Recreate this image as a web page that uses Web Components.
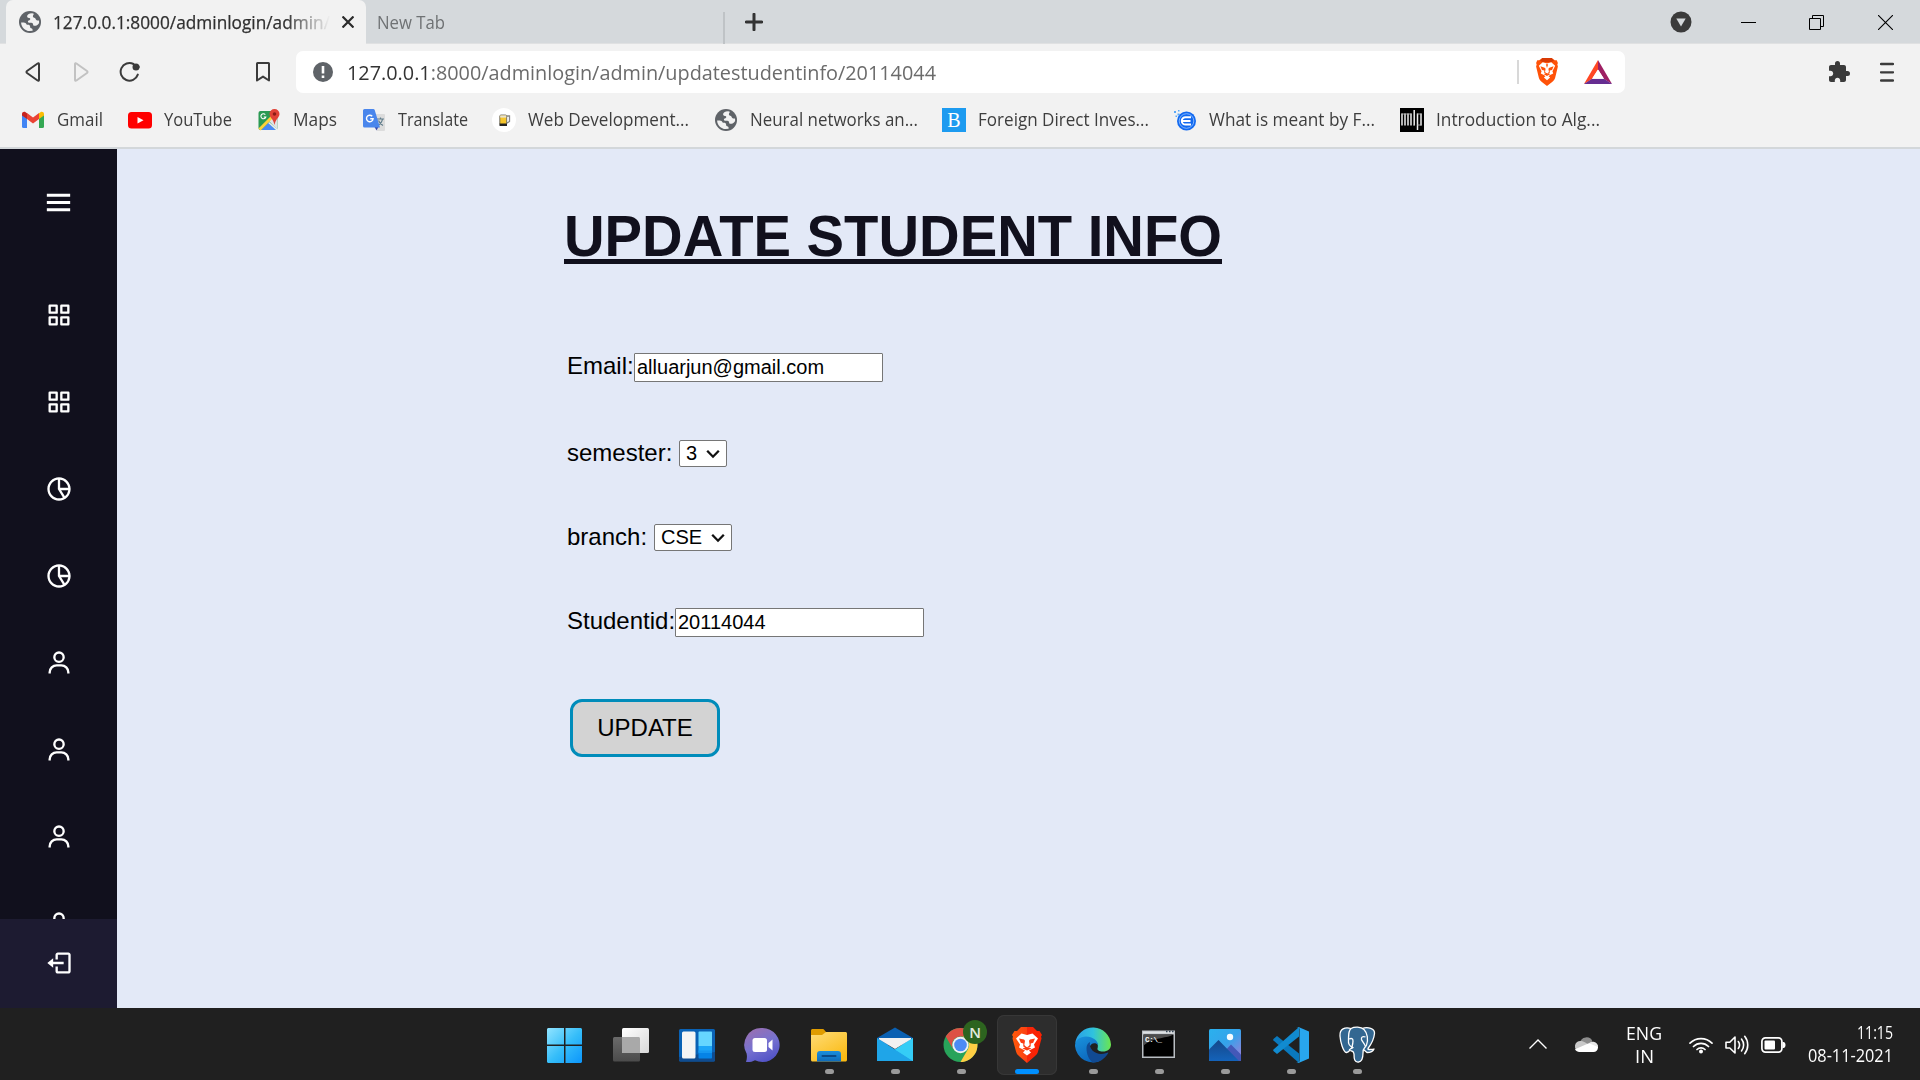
<!DOCTYPE html>
<html lang="en">
<head>
<meta charset="utf-8">
<title>Update student info</title>
<style>
html,body{margin:0;height:100%;overflow:hidden;background:#202020}
body{font-family:"Open Sans","Noto Sans",sans-serif}
</style>
</head>
<body>
<desktop-screen></desktop-screen>
<script>
const BX = {
  menu: '<path d="M4 6h16v2H4zm0 5h16v2H4zm0 5h16v2H4z"/>',
  grid: '<path d="M10 3H4a1 1 0 0 0-1 1v6a1 1 0 0 0 1 1h6a1 1 0 0 0 1-1V4a1 1 0 0 0-1-1zM9 9H5V5h4v4zM20 3h-6a1 1 0 0 0-1 1v6a1 1 0 0 0 1 1h6a1 1 0 0 0 1-1V4a1 1 0 0 0-1-1zm-1 6h-4V5h4v4zM10 13H4a1 1 0 0 0-1 1v6a1 1 0 0 0 1 1h6a1 1 0 0 0 1-1v-6a1 1 0 0 0-1-1zm-1 6H5v-4h4v4zM20 13h-6a1 1 0 0 0-1 1v6a1 1 0 0 0 1 1h6a1 1 0 0 0 1-1v-6a1 1 0 0 0-1-1zm-1 6h-4v-4h4v4z"/>',
  pie: '<path d="M12 2C6.486 2 2 6.486 2 12s4.486 10 10 10 10-4.486 10-10S17.514 2 12 2zm7.931 9H13V4.069A8.008 8.008 0 0 1 19.931 11zM4 12c0-4.072 3.061-7.436 7-7.931V12a.996.996 0 0 0 .111.438c.015.03.022.063.041.093l4.202 6.723A7.949 7.949 0 0 1 12 20c-4.411 0-8-3.589-8-8zm13.052 6.196L13.805 13h6.126a7.992 7.992 0 0 1-2.879 5.196z"/>',
  user: '<path d="M12 2a5 5 0 1 0 5 5 5 5 0 0 0-5-5zm0 8a3 3 0 1 1 3-3 3 3 0 0 1-3 3zm9 11v-1a7 7 0 0 0-7-7h-4a7 7 0 0 0-7 7v1h2v-1a5 5 0 0 1 5-5h4a5 5 0 0 1 5 5v1z"/>',
  exit: '<path d="m2 12 5 4v-3h9v-2H7V8z"/><path d="M20 3h-9c-1.103 0-2 .897-2 2v4h2V5h9v14h-9v-4H9v4c0 1.103.897 2 2 2h9c1.103 0 2-.897 2-2V5c0-1.103-.897-2-2-2z"/>'
};
const GLOBE = '<circle cx="12" cy="12" r="11" fill="#5f6368"/><path fill="#f2f2f2" d="M14.2 3.2c-3.4.2-5.2 1.6-5.1 3.3.1 1 .9 1.5 2 1.4 1.300-.1 1.400 1 .9 1.900-.6 1-1.900.6-2.100 1.700-.1.900.700 1.200 2.100 1.200 1.800 0 3 .3 3.100 1.700.1 1.300 1.300 1.600 2.600 1.400 1.300-.2 2-.900 2.900-2 .6-.7.700-2.200.300-3.400-.9.400-1.900.2-2.600-.4-.7-.7-.5-1.600-1.400-2.100-.9-.4-1.900-.5-2-1.500-.1-1.200 1-1.700.9-2.600z"/><path fill="#f2f2f2" d="M3.100 12.500c.1 4.700 3.900 8.500 8.500 8.600l3-.4c.2-1.200-.3-2.100-1.500-2.400-.9-.2-1-.8-1-1.700 0-1.300-.9-1.900-2.200-1.900-1.200 0-1.500-.7-1.900-1.300-.5-.8-2.700-1.100-4.900-.9z"/>';
const ICONS = {
  globe: [24,24,'0 0 24 24',GLOBE],
  close: [12,12,'0 0 12 12','<path d="M.5.500l11 11M11.500.500l-11 11" stroke="#2b2b2b" stroke-width="2.200" fill="none"/>'],
  plus: [18,18,'0 0 18 18','<path d="M9 1.200v15.600M1.200 9h15.600" stroke="#333" stroke-width="3" stroke-linecap="round"/>'],
  dropdown: [22,22,'0 0 22 22','<circle cx="11" cy="11" r="10.500" fill="#3b3b3b"/><path d="M6.300 7.500h9.400L11 15.400z" fill="#d5d9dc"/>'],
  min: [15,15,'0 0 15 15','<path d="M0 7.500h15" stroke="#000"/>'],
  restore: [15,15,'0 0 15 15','<path d="M.5 3.500h11v11H.5zM3.500 3.500v-3h11v11h-3" fill="none" stroke="#000"/>'],
  wclose: [15,15,'0 0 15 15','<path d="M0 0l15 15M15 0 0 15" stroke="#000" fill="none" stroke-width="1.100"/>'],
  back: [16,22,'0 0 16 22','<path d="M14 3.200v15.600c0 1-.7 1.200-1.400.7L2 12c-.7-.5-.7-1.500 0-2L12.600 2.500c.7-.5 1.400-.3 1.400.7z" fill="none" stroke="#3b3b3b" stroke-width="2"/>'],
  fwd: [16,22,'0 0 16 22','<path d="M2 3.200v15.600c0 1 .7 1.200 1.400.7L14 12c.7-.5.7-1.500 0-2L3.400 2.500C2.700 2 2 2.200 2 3.200z" fill="none" stroke="#c2c2c2" stroke-width="2"/>'],
  reload: [22,22,'0 0 22 22','<path d="M18.800 13.600A8.800 8.800 0 1 1 14.500 3" fill="none" stroke="#3b3b3b" stroke-width="2" stroke-linecap="round"/><circle cx="17" cy="6" r="3.500" fill="#3b3b3b"/><path d="M17 6h2.500v1" stroke="#3b3b3b" stroke-width="2"/>'],
  bookmark: [16,22,'0 0 16 22','<path d="M2.500 2h11c.3 0 .5.200.5.500v17L8 15.600 2 19.500v-17c0-.3.200-.5.500-.5z" fill="none" stroke="#3b3b3b" stroke-width="2" stroke-linejoin="round"/>'],
  info: [20,20,'0 0 20 20','<circle cx="10" cy="10" r="10" fill="#5f6368"/><path d="M8.700 4h2.600v7.500H8.700zM8.700 13.500h2.600V16H8.700z" fill="#fff"/>'],
  brave: [24,28,'0 0 30 36','<path fill="#ff5208" d="M9 0h12l4 3h2.500l1.500 3.500-.700 2 .700 2.500-3.500 14.500c-.500 2-1.500 3.500-3.500 5L15 36l-7-5.500c-2-1.500-3-3-3.500-5L1 11l.700-2.500L1 6.500 2.500 3H5z"/><path fill="#d83a05" d="M9 0h12l3 3.500-3 1.500H9L6 3.500z"/><path fill="#fff" d="M9.500 5.500 15 7l5.500-1.500L25.500 10l-3.500 7 1 3-4 2-2 1.500 2 1.500-4 3.500-4-3.500 2-1.500-2-1.500-4-2 1-3-3.500-7z"/><path fill="#ff5208" d="M6.500 10.500 12 12.500l1.200 1.200-.7 4.300 2 2v1l-3-1.500 0-3.500-3-.700zM23.500 10.500 18 12.500l-1.200 1.200.7 4.300-2 2v1l3-1.500 0-3.500 3-.700zM11 21l4-1.600 4 1.600-4 2zM13.500 8h3L15 13z"/>'],
  bat: [28,24,'0 0 28 24','<path fill="#ff4724" d="M14 0 0 24l8-5 6-9.500z"/><path fill="#9e1f63" d="M14 0l14 24-8-5-6-9.500z"/><path fill="#662d91" d="M0 24h28l-8-5.300H8z"/><path fill="#fff" d="M14 9.500 20 18.700H8z"/>'],
  puzzle: [22,22,'1 1 22 22','<path fill="#3b3b3b" d="M20.500 11H19V7c0-1.100-.9-2-2-2h-4V3.500a2.500 2.500 0 0 0-5 0V5H4c-1.100 0-1.990.9-1.990 2v3.800H3.500c1.490 0 2.700 1.210 2.700 2.700s-1.210 2.700-2.700 2.700H2V20c0 1.100.9 2 2 2h3.800v-1.500c0-1.490 1.210-2.700 2.700-2.700s2.700 1.210 2.700 2.700V22H17c1.100 0 2-.9 2-2v-4h1.500a2.500 2.500 0 0 0 0-5z"/>'],
  burger: [14,20,'0 0 14 20','<path d="M1 2h12M1 10.300h12M1 18.500h12" stroke="#3b3b3b" stroke-width="2.300" stroke-linecap="round"/>'],
  gmail: [24,24,'0 0 24 24','<path fill="#4285f4" d="M1 6v12.500A1.500 1.500 0 0 0 2.500 20H6V10z"/><path fill="#34a853" d="M23 6v12.500a1.500 1.500 0 0 1-1.500 1.500H18V10z"/><path fill="#ea4335" d="M6 11V5l6 4.500L18 5v6l-6 4.500z"/><path fill="#c5221f" d="M1 7.500V6c0-2 2.200-2.800 3.600-1.800L6 5.200V11z"/><path fill="#fbbc04" d="M23 7.500V6c0-2-2.200-2.800-3.600-1.800L18 5.200V11z"/>'],
  youtube: [24,24,'0 0 24 24','<rect y="4" width="24" height="16.500" rx="3.500" fill="#f00"/><path fill="#fff" d="M9.500 9v6.500l6-3.250z"/>'],
  maps: [24,24,'0 0 24 24','<rect x="1.500" y="3" width="19" height="19" rx="2" fill="#2a9a53"/><path fill="#dfe3e6" d="M20.500 5v17L11 12z"/><path fill="#4a89f3" d="M4 22 11.500 14.500 19 22z"/><path d="M2.500 21.500 15.500 8.500" stroke="#fdd23b" stroke-width="3"/><path d="M11.700 14.500 20 22" stroke="#eef0f2" stroke-width="1.500"/><path d="M8.300 6.600A2.500 2.500 0 1 0 8.800 9H6.800" stroke="#fff" stroke-width="1.100" fill="none"/><path fill="#e04236" d="M17.500 1a5 5 0 0 1 5 5c0 3.500-4 5-5 11-1-6-5-7.500-5-11a5 5 0 0 1 5-5z"/><circle cx="17.500" cy="6" r="1.800" fill="#8c1d16"/>'],
  translate: [24,24,'0 0 24 24','<path fill="#dcdcdc" d="M11 6h11a1 1 0 0 1 1 1v15a1 1 0 0 1-1 1h-7z"/><path d="M15 11h7M18.500 9.500V11M20.500 11c-.5 3-2 5-4.500 6.500M16.500 12.500c1 2.500 2.500 4 4.500 5" stroke="#607d8b" stroke-width="1.200" fill="none"/><path fill="#3949ab" d="M12 18h5l-2.500 4.500z"/><path fill="#4a86ec" d="M2.500 1h8.800a1.500 1.500 0 0 1 1.400 1L18 19.500H2.500A1.500 1.500 0 0 1 1 18V2.500A1.500 1.500 0 0 1 2.500 1z"/><path d="M10.200 8.200a3.300 3.300 0 1 0 .9 2.600H8.200" stroke="#fff" stroke-width="1.400" fill="none"/>'],
  beer: [24,24,'0 0 24 24','<circle cx="12" cy="12" r="12" fill="#fff"/><path d="M15 8h2.500v5.500L15 15" fill="none" stroke="#888" stroke-width="1.300"/><rect x="7.800" y="7" width="6.900" height="10" rx="1.200" fill="#f6c62c" stroke="#555" stroke-width=".8"/><path fill="#e8e2d2" d="M8.200 7.400h6v2.200h-6z"/><path fill="#222" d="M7.500 15.500H15V18H7.500z"/>'],
  brit: [24,24,'0 0 24 24','<path fill="#1d9bf0" d="M0 0h24v24H0z"/><text x="12" y="18.500" text-anchor="middle" font-family="Liberation Serif" font-size="20" fill="#fff">B</text>'],
  ecom: [24,24,'0 0 24 24','<circle cx="13.500" cy="13" r="9.500" fill="#1269f0"/><circle cx="13.500" cy="13" r="7.300" fill="none" stroke="#9cc6ff" stroke-width=".8"/><path d="M18 9.200h-5.500a3.700 3.700 0 0 0 0 7.400H18M9.500 13h8" stroke="#fff" stroke-width="2" fill="none"/><path fill="#5aa9f7" d="M1 3h2v2H1zM4.500 5.500h2v2h-2zM5 2h1.500v1.500H5zM2.500 7.500H4V9H2.500z"/>'],
  mit: [24,24,'0 0 24 24','<path d="M0 0h24v24H0z"/><path d="M2 5.500v12M5 5.500v12M8 5.500v12M11 5.500v12M14.200 2v15.500M17.500 5.500V22M21 5.500v12" stroke="#eee" stroke-width="1.500"/><path d="M1.500 6h10M17 6h4.500M13.500 17h1M17 17h4.500" stroke="#bbb" stroke-width=".8"/>'],
  start: [40,40,'0 0 40 40','<defs><linearGradient id="a" gradientUnits="userSpaceOnUse" x1="4" y1="4" x2="38" y2="38"><stop stop-color="#8ae1ff"/><stop offset=".5" stop-color="#35bdf9"/><stop offset="1" stop-color="#0a94fb"/></linearGradient></defs><path fill="url(#a)" d="M3.500 3H19v16.500H2V4.500C2 3.700 2.700 3 3.500 3zM20.500 3h15c.8 0 1.500.7 1.500 1.500v15H20.500zM2 21h17v17H3.500c-.8 0-1.500-.7-1.500-1.500zM20.500 21H37v15.500c0 .8-.7 1.500-1.500 1.500h-15z"/>'],
  taskview: [40,40,'0 0 40 40','<defs><linearGradient id="a" x2="1" y2="1"><stop stop-color="#fff"/><stop offset="1" stop-color="#d8d8d8"/></linearGradient><linearGradient id="b" x2="0" y2="1"><stop stop-color="#6a6a6a"/><stop offset="1" stop-color="#4b4b4b"/></linearGradient></defs><rect x="2" y="12" width="27" height="24.500" rx="1.500" fill="url(#b)"/><rect x="11" y="3" width="27" height="25" rx="1.500" fill="url(#a)"/><path fill="#a9a9a9" d="M11 12h16.500c.8 0 1.500.7 1.500 1.500V28H12.500c-.8 0-1.500-.7-1.500-1.500z"/>'],
  widgets: [40,40,'0 0 40 40','<rect x="2" y="4" width="36" height="32.500" rx="1.500" fill="#0a62b5"/><path d="M2 32v3c0 .8.700 1.500 1.500 1.500h33c.8 0 1.500-.7 1.500-1.500v-8z" fill="#0f4c90"/><rect x="5" y="6.500" width="13.500" height="27" rx="1.500" fill="#f5f5f5"/><path fill="#66d6ff" d="M21.500 7.500c0-.6.400-1 1-1H34c.6 0 1 .4 1 1V21H21.500z"/><path fill="#1da6f8" d="M21.500 21H35v6.500H21.500z"/><path fill="#0583e6" d="M21.500 27.500H35v5c0 .6-.4 1-1 1H22.500c-.6 0-1-.4-1-1z"/><path fill="#1597f0" d="M21.500 25.500H35V28H21.500z"/>'],
  chat: [40,40,'0 0 40 40','<defs><linearGradient id="a" x1=".2" x2=".7" y2="1"><stop stop-color="#9a6fb0"/><stop offset=".5" stop-color="#7772d0"/><stop offset="1" stop-color="#4f51c6"/></linearGradient></defs><path fill="url(#a)" d="M19.500 3a17 17 0 1 1-7.500 32.200c-2.500 1.500-5.500 2-9 1.800 1-3 1.200-5.300.6-8.500A17 17 0 0 1 19.500 3z"/><rect x="9.500" y="13" width="14.500" height="14" rx="2.500" fill="#fff"/><path fill="#fff" d="m25.500 18 4-3.500v11l-4-3.500z"/>'],
  folder: [40,40,'0 0 40 40','<defs><linearGradient id="a" x2=".7" y2="1"><stop stop-color="#ffdc77"/><stop offset="1" stop-color="#fabb15"/></linearGradient><linearGradient id="b" x2="0" y2="1"><stop stop-color="#1b8fdd"/><stop offset="1" stop-color="#0f6bb9"/></linearGradient></defs><path fill="#e09c00" d="M2 5.500C2 4.700 2.700 4 3.500 4h10c1 0 1.500.5 3.500 3v4H2z"/><path fill="url(#a)" d="M2 10h11l4-3h19.500c.8 0 1.500.7 1.500 1.500v26.500c0 .8-.7 1.500-1.500 1.500h-33c-.8 0-1.500-.7-1.500-1.500z"/><path fill="url(#b)" d="M8 36.500V29a3 3 0 0 1 3-3h18a3 3 0 0 1 3 3v7.500z"/><path d="M13.500 31h13" stroke="#0a4a88" stroke-width="2" stroke-linecap="round"/>'],
  mail: [40,40,'0 0 40 40','<path fill="#0a60b2" d="M20 2.500 38 13v7H2v-7z"/><path fill="#2bc4f3" d="M38 13v23H2z"/><path fill="#1fa5e8" d="M2 13v23h36L2 13z"/><path fill="#35cdf6" d="M38 13 20 24.500 38 36z"/><path fill="#f1f1f1" d="M4 13h32v1.300L20 24 4 14.300z"/>'],
  chrome: [40,40,'0 0 40 40','<circle cx="19.500" cy="20" r="17" fill="#28a35a"/><path fill="#dd5144" d="M4.800 11.500a17 17 0 0 1 29.400 0H19.500A8.500 8.500 0 0 0 12.100 24.200z"/><path fill="#ffce44" d="M34.200 11.500A17 17 0 0 1 19.500 37l7.400-12.800a8.500 8.500 0 0 0-7.400-12.700z"/><circle cx="19.500" cy="20" r="8.200" fill="#f1f1f1"/><circle cx="19.500" cy="20" r="6.300" fill="#4c8bf5"/>'],
  bravebig: [40,40,'-5 -2 40 40','<defs><linearGradient id="a"><stop stop-color="#ff5a0a"/><stop offset=".5" stop-color="#fb4012"/><stop offset=".51" stop-color="#f5260a"/><stop offset="1" stop-color="#ff2000"/></linearGradient></defs><path fill="url(#a)" d="M9 0h12l4 4h2.500l2.500 4-1 1.500.500 2-3.500 13c-.500 2-1.500 3.500-3.500 5L15 36l-7.500-6.500c-2-1.500-3-3-3.500-5L.500 11.500l.500-2L0 8l2.500-4H5z"/><path fill="#fff" d="M9.500 6.500 15 8l5.500-1.500 5.500 5-4 6 1 3-4 2-2 1 2 2-4 3-4-3 2-2-2-1-4-2 1-3-4-6z"/><path fill="#fb3c12" d="M7 11.500 12 12.500l1 1.200-.7 4.300 2 2v1l-3-1.500 0-3-2.500-.700zM23 11.500 18 12.500l-1 1.200.7 4.300-2 2v1l3-1.500 0-3 2.500-.700zM10.500 21.500l4.500-1.700 4.500 1.700-4.500 2z"/>'],
  edge: [40,40,'0 0 40 40','<defs><linearGradient id="a"><stop stop-color="#2a9fe6"/><stop offset=".5" stop-color="#2fc2df"/><stop offset="1" stop-color="#6be64e"/></linearGradient><linearGradient id="b" x2=".5" y2="1"><stop stop-color="#1a93dd"/><stop offset="1" stop-color="#0c66bb"/></linearGradient></defs><path fill="url(#a)" d="M2.200 18A18 18 0 0 1 38 19.500c0 4.500-3.500 7-8 7-4 0-6-1.500-5.500-3 1.500-4-1-9.500-8-9.500-6 0-11 1.500-14.300 4z"/><path fill="url(#b)" d="M2 21c0-6 5-9.500 11-9.500 7 0 12 4.500 12 8.500-2-3-8-2.500-8.500 3-.5 6 5 13 12 12.300A18 18 0 0 1 2 21z"/><path fill="#114a92" d="M13.500 23c0-3 1.500-5 3.500-6-1.500 7 5 12 11 12 4 0 6-1.500 7-1.500.5 0 .3.500 0 1-3 5-8.500 9-15 9-4-2.500-6.500-8-6.500-14.500z"/>'],
  cmd: [40,40,'0 0 40 40','<path fill="#b9bec3" d="M3 5.500h33v27.500H3z"/><path fill="#dfe2e4" d="M4 6.500h31v2H4z"/><path fill="#000" d="M4.500 9.500h30v22h-30z"/><path fill="#4d4d4d" d="M4.500 9.500h29.500c-5 4-18 2-29.500 11z"/><path d="M27 6.500h1.500M30 6.500h1.500M33 6.500h1.500" stroke="#345" stroke-width="1.500"/><text x="6" y="16.500" font-family="Liberation Mono" font-weight="bold" font-size="7.500" letter-spacing="-.3" fill="#fff">C:\\_</text>'],
  photos: [40,40,'0 0 40 40','<defs><linearGradient id="a" x2="1" y2="1"><stop stop-color="#2ab1ee"/><stop offset=".5" stop-color="#35a2ea"/><stop offset="1" stop-color="#a77bd8"/></linearGradient><linearGradient id="b" x2="0" y2="1"><stop stop-color="#154789"/><stop offset="1" stop-color="#1463ba"/></linearGradient></defs><rect x="4" y="4" width="32" height="32" rx="1.500" fill="url(#a)"/><path fill="#4458b8" d="m18 28 8-8.500 10 10V36H24z"/><path fill="url(#b)" d="M4 24.500 13.500 15 34 36H5.500c-.8 0-1.500-.7-1.500-1.500z"/><circle cx="25" cy="12" r="3.200" fill="#f4fbff"/>'],
  vscode: [40,40,'0 0 40 40','<path fill="#0a79bd" d="M3 13.500 6 11l22 17.500V38L2.500 15.500c-.6-.6-.3-1.300.5-2z"/><path fill="#118bd0" d="M3 26.500 6 29l22-17.500V2L2.500 24.500c-.6.6-.3 1.300.5 2z"/><path fill="#28a6ee" d="M27.500 2 38 6.500v27L27.500 38c-.5 0-1.500-.3-2-1 1.500 1 3 .5 3-1.500V4.500c0-2-1.500-2.500-3-1.500.5-.7 1.500-1 2-1z"/>'],
  pg: [40,40,'0 0 40 40','<g fill="#336791" stroke="#fff" stroke-width="1.300" stroke-linejoin="round"><path d="M14 3.500C8 1.500 2.500 4 3 11c.3 5 3 16 6.500 16.500 2.500.3 4-3.500 6-5.500z"/><path d="M25 3.500c6-2 13 0 12.500 5-.4 4.500-3.500 11-6.500 15-1 1.500 4.500 1 6 .5-1 2.500-4 3.500-7 3.500l-6-5z"/><path d="M14 3.500c3.500-2 10-2 13 1 3.500 3.500 4.500 10.500 2.500 15.500-2 4.500-3.500 2-3.500 8 0 5-.5 8.500-4.500 9-4 .4-4.500-3-4.500-8-.2-3.500-1.500-2.500-4-3.500-2-1 2-2 3-3-4-1.500-5-3.500-4.500-8 .2-4-.5-8 2.500-11z"/><path fill="none" d="M12 14c2.500-1 4-.5 4 2 0 2-.5 4-1 6M28.500 12c-3-1-4.500 0-4 2.500.5 2 3 4 4 7"/></g>'],
  chevron: [18,10,'0 0 18 10','<path d="M.5 9.500 9 1l8.500 8.500" fill="none" stroke="#fff" stroke-width="1.400"/>'],
  cloud: [24,16,'0 0 24 16','<path fill="#8d8d8d" d="M6 7a6.500 6.500 0 0 1 12.500-1.500L13 9z"/><path fill="#c9c9c9" d="M5.500 15.500A5.300 5.300 0 0 1 7 5c4 .3 6 3 11 5.500L12 15z"/><path fill="#fff" d="M5.500 16c-2 0-3.500-1-4.500-2.700L16.500 6.500C21 5.500 24 8 24 11.500c0 2.500-2 4.500-4.500 4.500z"/><path fill="#e6e6e6" d="M16.500 6.500c3-2 7.500.5 7.500 4.500L15 7.300z"/>'],
  wifi: [24,18,'0 0 24 18','<g fill="none" stroke="#fff" stroke-width="1.700" stroke-linecap="round"><path d="M1 7.200a15.600 15.600 0 0 1 22 0M4.500 10.500a10.600 10.600 0 0 1 15 0M8 13.500a5.800 5.800 0 0 1 8 0"/></g><circle cx="12" cy="15.500" r="2" fill="#fff"/>'],
  speaker: [24,20,'0 0 24 20','<g fill="none" stroke="#fff" stroke-width="1.600" stroke-linecap="round" stroke-linejoin="round"><path d="M1 7.200h3.800L10 2v16l-5.200-5H1z"/><path d="M13.300 6.500a6 6 0 0 1 0 7M16.500 4a9.500 9.500 0 0 1 0 12M19.700 1.300a14 14 0 0 1 0 17.400"/></g>'],
  battery: [25,16,'0 0 25 16','<rect x=".9" y=".9" width="20" height="14.200" rx="3.500" fill="none" stroke="#fff" stroke-width="1.700"/><rect x="3.500" y="3.500" width="10.500" height="9" rx="1" fill="#fff"/><path fill="#fff" d="M21.500 5h1c1 0 2 1 2 3s-1 3-2 3h-1z"/>']
};
class BaseElement extends HTMLElement {
  constructor(){ super(); this.attachShadow({mode:'open'}); }
  connectedCallback(){ this.shadowRoot.innerHTML = `<style>${this.css()}</style>${this.html()}`; this.ready(); }
  css(){return ''} html(){return ''} ready(){}
}
customElements.define('ui-icon', class extends BaseElement {
  css(){return ':host{display:block;flex:none}svg{display:block}'}
  html(){ const [w,h,v,b]=ICONS[this.getAttribute('name')]; return `<svg width="${w}" height="${h}" viewBox="${v}">${b}</svg>`; }
});
customElements.define('bx-icon', class extends BaseElement {
  css(){return ':host{display:block;flex:none}svg{display:block;fill:#fff}'}
  html(){ const s=this.getAttribute('size')||28; return `<svg width="${s}" height="${s}" viewBox="0 0 24 24">${BX[this.getAttribute('name')]}</svg>`; }
});
/* Label condensed or widened horizontally to a set advance width. */
customElements.define('fit-text', class extends BaseElement {
  css(){return `:host{display:block;flex:none;width:${this.getAttribute('w')}px;white-space:pre}span{display:inline-block;transform-origin:0 50%}`}
  html(){return '<span><slot></slot></span>'}
  ready(){ const s=this.shadowRoot.querySelector('span'); const n=s.getBoundingClientRect().width; if(n) s.style.transform=`scaleX(${this.getAttribute('w')/n})`; }
});
customElements.define('tab-strip', class extends BaseElement {
  css(){return `:host{display:flex;height:44px;background:#d5d9dc;box-shadow:inset 0 -1px #e0e1e2;padding-left:6px;font-size:17.500px;line-height:44px;align-items:stretch}
  .tab{display:flex;align-items:center;width:360px;box-sizing:border-box}
  .active{background:#f2f2f2;border-radius:7px 7px 0 0;padding-left:12px;color:#303030;-webkit-text-stroke:.25px #303030}
  .fade{margin-left:11px;width:277px;-webkit-mask-image:linear-gradient(90deg,#000 84%,transparent);mask-image:linear-gradient(90deg,#000 84%,transparent)}
  ui-icon.x{margin-left:12px}
  .idle{width:357px;padding-left:11px;color:#6f7274}
  .sep{width:2px;height:32px;background:#bfc3c6;align-self:flex-end}
  .plus{align-self:center;margin:0 auto 0 20px}
  .win{display:flex;align-items:center;padding-right:27px}
  .win ui-icon{margin-left:54px}.win .n{margin-left:49px}.win .r{margin-left:53px}`}
  html(){return `<div class="tab active"><ui-icon name="globe"></ui-icon><div class="fade"><fit-text w="277">127.0.0.1:8000/adminlogin/admin/</fit-text></div><ui-icon class="x" name="close"></ui-icon></div>
  <div class="tab idle"><fit-text w="68">New Tab</fit-text></div><div class="sep"></div><ui-icon class="plus" name="plus"></ui-icon>
  <div class="win"><ui-icon name="dropdown"></ui-icon><ui-icon class="n" name="min"></ui-icon><ui-icon class="r" name="restore"></ui-icon><ui-icon name="wclose"></ui-icon></div>`}
});
customElements.define('nav-bar', class extends BaseElement {
  css(){return `:host{display:flex;align-items:center;height:56px;box-sizing:border-box;padding:0 26px 0 25px;font-size:20.500px;line-height:42px}
  .f{margin-left:32px}.r{margin-left:30px}.b{margin-left:114px}
  .url{display:flex;align-items:center;box-sizing:border-box;width:1329px;height:42px;margin-left:25px;background:#fff;border-radius:7px;padding:0 13px 0 17px;color:#6b6b6b}
  fit-text{margin:0 auto 0 14px}b{font-weight:400;color:#333}
  .sep{width:2px;height:24px;background:#d8d8d8;margin-right:16px}
  .bat{margin-left:25px}.p{margin-left:203px}.m{margin-left:30px}`}
  html(){return `<ui-icon name="back"></ui-icon><ui-icon class="f" name="fwd"></ui-icon><ui-icon class="r" name="reload"></ui-icon><ui-icon class="b" name="bookmark"></ui-icon>
  <div class="url"><ui-icon name="info"></ui-icon><fit-text w="589"><b>127.0.0.1</b>:8000/adminlogin/admin/updatestudentinfo/20114044</fit-text><div class="sep"></div><ui-icon name="brave"></ui-icon><ui-icon class="bat" name="bat"></ui-icon></div>
  <ui-icon class="p" name="puzzle"></ui-icon><ui-icon class="m" name="burger"></ui-icon>`}
});
customElements.define('bookmark-item', class extends BaseElement {
  css(){return `:host{display:flex;align-items:center;gap:12px;flex:none;width:${this.getAttribute('span')}px}fit-text{margin-top:-2px}`}
  html(){return `<ui-icon name="${this.getAttribute('icon')}"></ui-icon><fit-text w="${this.getAttribute('w')}">${this.getAttribute('label')}</fit-text>`}
});
customElements.define('bookmark-bar', class extends BaseElement {
  css(){return `:host{display:flex;align-items:center;height:47px;box-sizing:border-box;padding:0 0 7px 21px;font-size:17.600px;line-height:30px;color:#3e3e3e}`}
  html(){return [['gmail','Gmail',46,107],['youtube','YouTube',68,129],['maps','Maps',44,105],['translate','Translate',70,130],['beer','Web Development...',161,222],['globe','Neural networks an...',168,228],['brit','Foreign Direct Inves...',171,231],['ecom','What is meant by F...',166,227],['mit','Introduction to Alg...',164,230]].map(([i,l,w,s])=>`<bookmark-item icon="${i}" label="${l}" w="${w}" span="${s}"></bookmark-item>`).join('')}
});
customElements.define('side-nav', class extends BaseElement {
  css(){return `:host{display:flex;flex-direction:column;width:117px;height:859px;background:#11101d;flex:none}
  .top{height:106px;display:flex;justify-content:center;align-items:center}
  .list{height:664px;overflow:hidden;box-sizing:border-box;padding-top:16px}
  .list div{height:87px;display:flex;align-items:center;justify-content:center}
  .out{height:89px;background:#1d1b31;display:flex;align-items:center;justify-content:center;padding-bottom:2px;box-sizing:border-box}`}
  html(){return `<div class="top"><bx-icon name="menu" size="35"></bx-icon></div><div class="list">${['grid','grid','pie','pie','user','user','user','user'].map(n=>`<div><bx-icon name="${n}"></bx-icon></div>`).join('')}</div><div class="out"><bx-icon name="exit"></bx-icon></div>`}
});
customElements.define('form-field', class extends BaseElement {
  css(){return `:host{display:flex;align-items:flex-start;height:29px;font:24px/28px "Liberation Sans",Arial,sans-serif;color:#000}
  :host([type=select]){height:27px}
  label{flex:none;width:${this.getAttribute('lw')}px;white-space:nowrap;margin-top:-1px}
  input{box-sizing:border-box;width:${this.getAttribute('w')}px;font:20px "Liberation Sans",Arial,sans-serif;color:#000;background:#fff;border:1px solid #767676;border-radius:1px;margin:0;outline:none;height:29px;padding:1px 2px}
  .sel{display:flex;align-items:center;justify-content:space-between;box-sizing:border-box;width:${this.getAttribute('w')}px;height:27px;border:1px solid #767676;border-radius:2px;background:#fff;font-size:20px;line-height:25px;padding:0 6px 0 6px}
  svg{display:block}`}
  html(){const v=this.getAttribute('value');return `<label>${this.getAttribute('label')}</label>`+(this.getAttribute('type')==='select'
   ?`<div class="sel" role="combobox"><span>${v}</span><svg width="14" height="10" viewBox="0 0 14 10"><path d="m1.200 1.700 5.800 6 5.800-6" fill="none" stroke="#111" stroke-width="2.300"/></svg></div>`
   :`<input value="${v}" spellcheck="false">`)}
});
customElements.define('student-form', class extends BaseElement {
  css(){return `:host{display:flex;flex-direction:column;align-items:flex-start;flex:1;height:859px;box-sizing:border-box;padding:55px 0 0 447px;background:#e3e9f7}
  h1{margin:0;font:bold 57px/64px "Liberation Sans",Arial,sans-serif;color:#11101d;height:64px}
  h1 span{display:block;text-decoration:underline;text-decoration-thickness:5px;text-underline-offset:3px;text-decoration-skip-ink:none}
  form-field{margin-left:3px}
  .e{margin-top:85px}.s{margin-top:58px}.b{margin-top:57px}.i{margin-top:57px}
  button{margin:62px 0 0 6px;width:150px;height:58px;border:3px solid #008cba;border-radius:12px;background:#d3d3d3;font:24px "Liberation Sans",Arial,sans-serif;color:#000;padding:0}`}
  html(){return `<h1><fit-text w="658"><span>UPDATE STUDENT INFO</span></fit-text></h1>
  <form-field class="e" label="Email:" lw="67" w="249" value="alluarjun@gmail.com"></form-field>
  <form-field class="s" type="select" label="semester:" lw="112" w="48" value="3"></form-field>
  <form-field class="b" type="select" label="branch:" lw="87" w="78" value="CSE"></form-field>
  <form-field class="i" label="Studentid:" lw="108" w="249" value="20114044"></form-field>
  <button>UPDATE</button>`}
});
customElements.define('task-item', class extends BaseElement {
  css(){return `:host{display:flex;position:relative;flex-direction:column;align-items:center;width:60px;height:60px;margin:0 3px;box-sizing:border-box;border-radius:7px;padding-top:10px}
  :host([active]){background:#2d2d2d;box-shadow:inset 0 0 0 1px #373737}
  .dot{width:9px;height:5px;border-radius:3px;background:#9a9a9a;margin-top:4px}
  :host([active]) .dot{width:24px;background:#0090ff}
  .badge{position:absolute;left:32px;top:5px;width:24px;height:24px;border-radius:50%;background:#2d641f;color:#e3eadf;font:600 15px/24px "Open Sans",sans-serif;text-align:center}`}
  html(){return `<ui-icon name="${this.getAttribute('icon')}"></ui-icon>${this.hasAttribute('open')?'<div class="dot"></div>':''}${this.hasAttribute('badge')?`<div class="badge">${this.getAttribute('badge')}</div>`:''}`}
});
customElements.define('task-bar', class extends BaseElement {
  css(){return `:host{display:flex;height:72px;background:#202020;box-sizing:border-box;padding:7px 27px 0 532px;color:#fff;font-size:18px}
  .apps{display:flex;margin-right:auto}
  .tray{display:flex;align-items:center;height:60px;line-height:23px}
  .chev{margin-right:1px}
  .cloud{margin-left:26px}.lang{margin-left:28px;display:flex;flex-direction:column;align-items:center}
  .w{margin-left:27px}.sp{margin-left:12px}.ba{margin-left:12px}
  .clock{margin-left:22px;display:flex;flex-direction:column;align-items:flex-end;padding-bottom:2px}.cloud,.chev{margin-top:-2px}`}
  html(){return `<div class="apps">${['start','taskview','widgets','chat'].map(n=>`<task-item icon="${n}"></task-item>`).join('')}${['folder','mail'].map(n=>`<task-item icon="${n}" open></task-item>`).join('')}<task-item icon="chrome" open badge="N"></task-item><task-item icon="bravebig" open active></task-item>${['edge','cmd','photos','vscode','pg'].map(n=>`<task-item icon="${n}" open></task-item>`).join('')}</div>
  <div class="tray"><ui-icon class="chev" name="chevron"></ui-icon><ui-icon class="cloud" name="cloud"></ui-icon><div class="lang"><fit-text w="36">ENG</fit-text><fit-text w="19">IN</fit-text></div><ui-icon class="w" name="wifi"></ui-icon><ui-icon class="sp" name="speaker"></ui-icon><ui-icon class="ba" name="battery"></ui-icon><div class="clock"><fit-text w="36">11:15</fit-text><fit-text w="85">08-11-2021</fit-text></div></div>`}
});
customElements.define('desktop-screen', class extends BaseElement {
  css(){return `:host{display:flex;flex-direction:column;width:1920px;height:1080px;overflow:hidden}
  .chrome{background:#f2f2f2;height:149px;box-sizing:border-box;border-bottom:2px solid #d3d7da}
  main{display:flex;height:859px}`}
  html(){return `<div class="chrome"><tab-strip></tab-strip><nav-bar></nav-bar><bookmark-bar></bookmark-bar></div><main><side-nav></side-nav><student-form></student-form></main><task-bar></task-bar>`}
});
</script>
</body>
</html>
